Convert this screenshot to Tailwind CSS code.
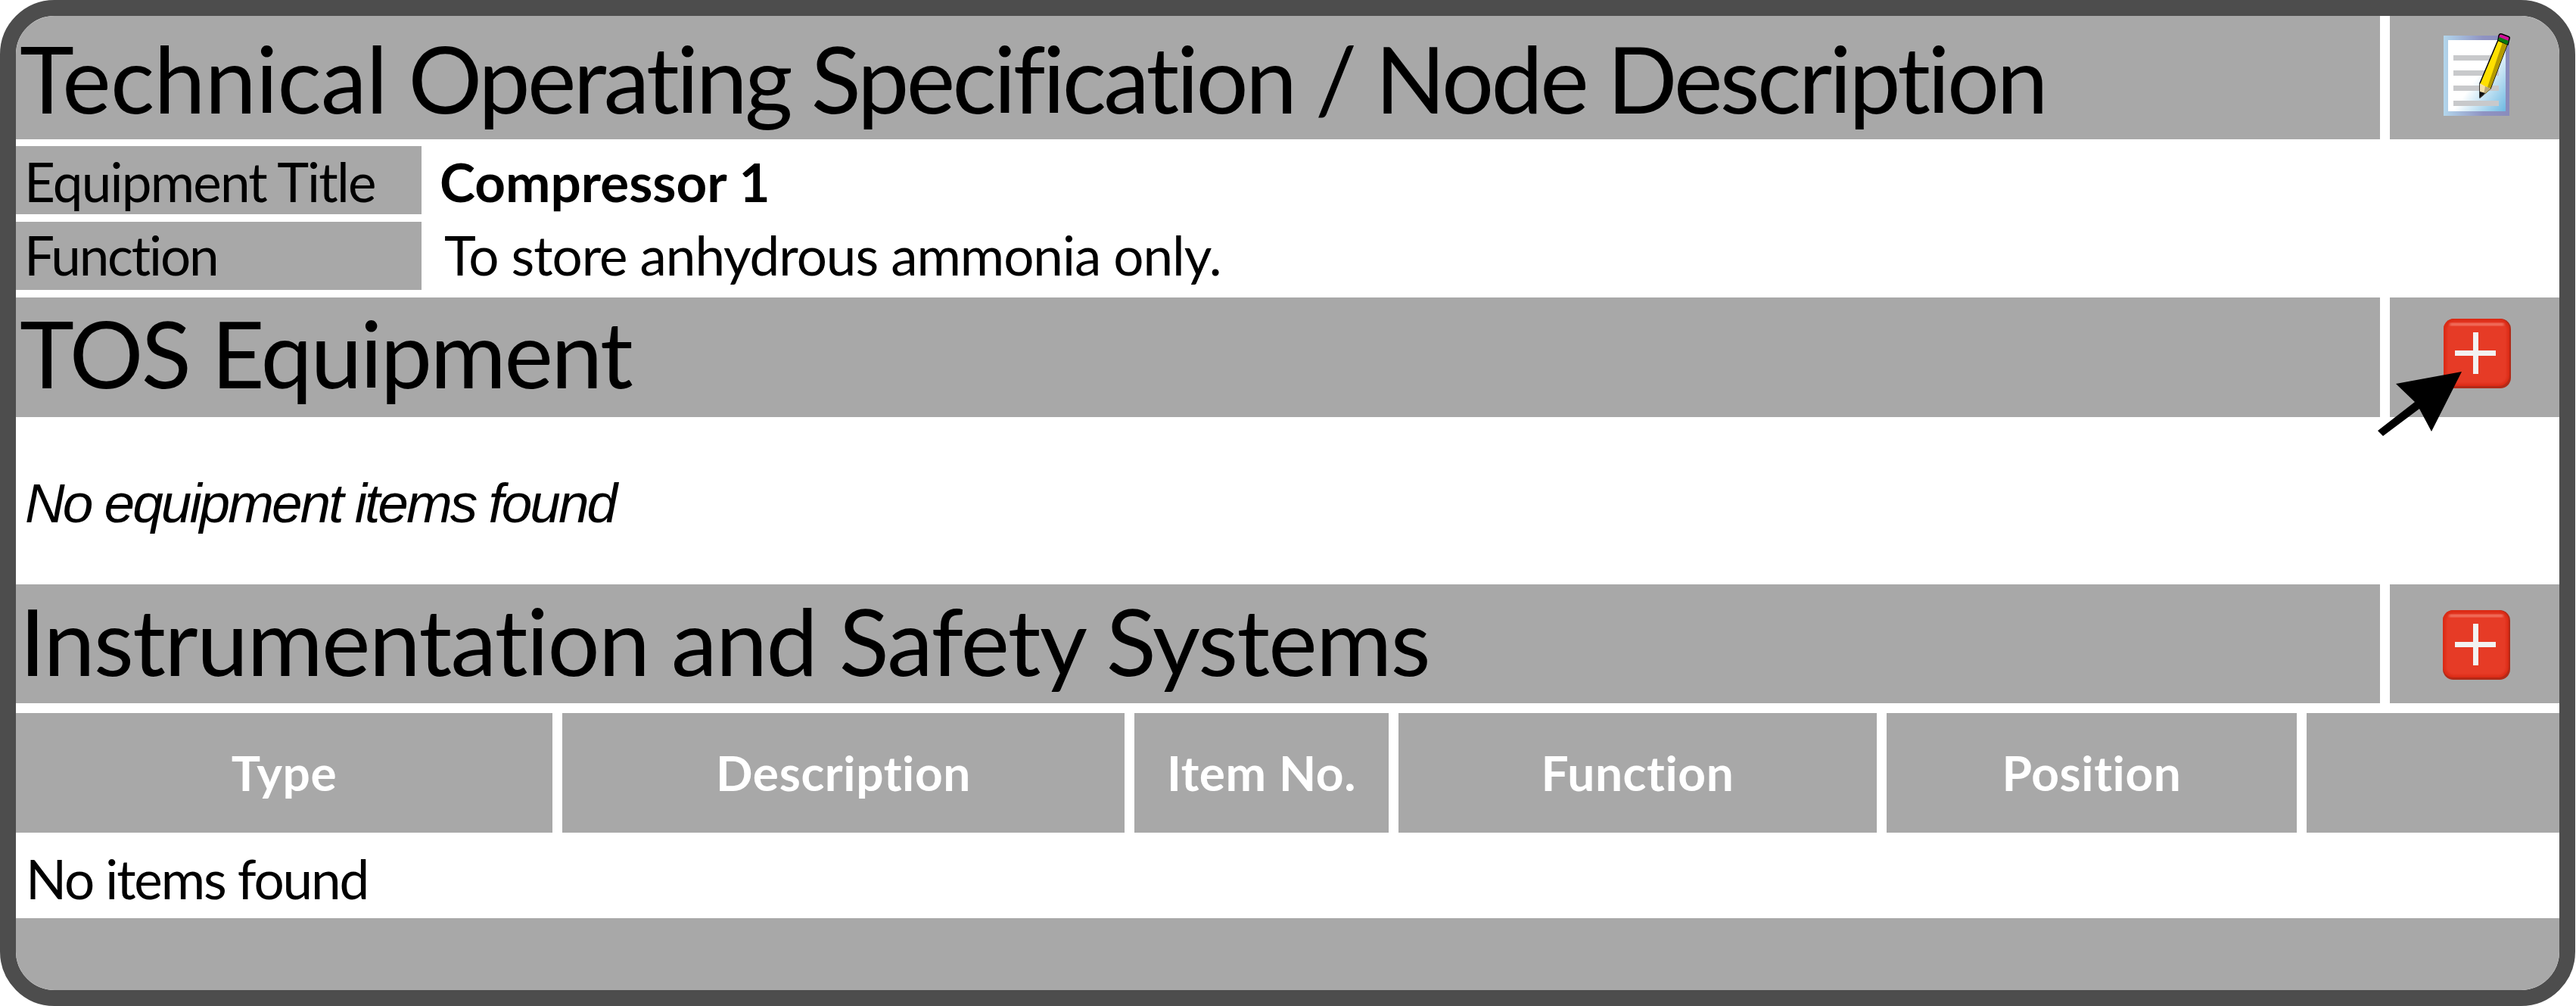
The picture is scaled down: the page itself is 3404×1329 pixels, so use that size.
<!DOCTYPE html>
<html lang="en">

<head>
    <meta charset="UTF-8">
    <meta name="viewport" content="width=device-width, initial-scale=1.0">
    <title>Technical Operating Specification</title>
    <script src="https://cdn.jsdelivr.net/npm/@tailwindcss/browser@4"></script>
</head>

<body class="h-[1329px] overflow-hidden bg-white">
    <div class="relative flex h-[1329px] w-[3403px] flex-col overflow-hidden rounded-[72px] border-[21px] border-[#4d4d4d] bg-white font-['Lato',sans-serif] text-black [font-variant-ligatures:none]">

        <!-- title -->
        <div class="flex h-[163px] shrink-0 gap-[13px]">
            <div class="flex flex-1 items-center whitespace-pre bg-[#a8a8a8] pl-[5px] text-[122px] leading-none tracking-[-3.6px]"><span class="tracking-[-0.8px]">Technical</span> Operating Specification / Node Description</div>
            <div class="flex w-[224px] bg-[#a8a8a8] pl-[62px] pt-[19px]">
                <svg width="110" height="120" viewBox="0 0 110 120">
                    <defs>
                        <linearGradient id="frame" x1="0" x2="1" y1="0" y2="0">
                            <stop offset="0" stop-color="#b3d6ec" />
                            <stop offset="0.6" stop-color="#8f93c2" />
                            <stop offset="1" stop-color="#8a8cbc" />
                        </linearGradient>
                        <linearGradient id="sheet" x1="0.2" x2="1" y1="0.3" y2="1">
                            <stop offset="0.35" stop-color="#ffffff" />
                            <stop offset="1" stop-color="#6db9e2" />
                        </linearGradient>
                    </defs>
                    <rect x="9" y="7" width="87" height="106" fill="url(#frame)" />
                    <rect x="15" y="13" width="76" height="94" fill="url(#sheet)" />
                    <rect x="22" y="33" width="60" height="7" fill="#c8c9cb" />
                    <rect x="22" y="53" width="60" height="7" fill="#c8c9cb" />
                    <rect x="22" y="73" width="60" height="7" fill="#c8c9cb" />
                    <rect x="22" y="93" width="60" height="7" fill="#c8c9cb" />
                    <path d="M81 13 L93 19 L71 77 L57 89 L57 70 Z" fill="#ffe000" stroke="#000" stroke-width="1.5" stroke-linejoin="round" />
                    <path d="M87 16 L93 19 L71 77 L64 84 Z" fill="#b49b00" />
                    <path d="M57 70 L64 74 L71 77 L57 89 Z" fill="#f3dfa8" />
                    <path d="M64 74 L71 77 L62 85 Z" fill="#b9a77a" />
                    <path d="M57 81 L64 83 L57 89 Z" fill="#111" />
                    <path d="M81 13 L94 19 L96 11 Q97 9 94 8 L86 5 Q83 4 82 7 Z" fill="#d0109a" stroke="#000" stroke-width="1.5" stroke-linejoin="round" />
                    <path d="M81 13 L83 9 L95 14 L93 19 Z" fill="#0a7a10" />
                </svg>
            </div>
        </div>

        <!-- details -->
        <div class="mt-[9px] flex h-[90px] shrink-0">
            <div class="flex w-[536px] items-center bg-[#a8a8a8] pl-[11px] pt-[3px] text-[71px] leading-none tracking-[-1.8px]">Equipment Title</div>
            <div class="flex items-center pl-[24px] pt-[3px] text-[71px] font-bold leading-none">Compressor 1</div>
        </div>
        <div class="mt-[10px] flex h-[90px] shrink-0">
            <div class="flex w-[536px] items-center bg-[#a8a8a8] pb-[4px] pl-[11px] text-[71px] leading-none tracking-[-2.2px]">Function</div>
            <div class="flex items-center pb-[4px] pl-[30px] text-[71px] leading-none tracking-[-1.05px]">To store anhydrous ammonia only.</div>
        </div>

        <!-- equipment -->
        <div class="mt-[10px] flex h-[158px] shrink-0 gap-[13px]">
            <div class="flex flex-1 items-center bg-[#a8a8a8] pb-[12px] pl-[5px] text-[122px] leading-none tracking-[-2.5px]">TOS Equipment</div>
            <div class="flex w-[224px] bg-[#a8a8a8] pl-[71px] pt-[28px]">
                <svg width="89" height="92" viewBox="0 0 89 92">
                    <defs>
                        <filter id="soft" x="-20%" y="-20%" width="140%" height="140%">
                            <feGaussianBlur stdDeviation="1.5" />
                        </filter>
                    </defs>
                    <rect width="89" height="92" rx="14" fill="#b32a18" />
                    <rect width="87" height="89" rx="14" fill="#dc2c16" />
                    <rect x="4" y="4" width="80" height="82" rx="11" fill="#e63a28" filter="url(#soft)" />
                    <rect x="8" y="6" width="72" height="3" rx="1.5" fill="#f3806f" filter="url(#soft)" />
                    <rect x="15" y="42" width="54" height="7" fill="#f2f2f2" />
                    <rect x="39" y="18" width="7" height="55" fill="#f2f2f2" />
                </svg>
            </div>
        </div>
        <div class="flex h-[221px] shrink-0 items-center pl-[12px] pt-[6px] font-['Liberation_Sans',sans-serif] text-[73px] italic leading-none tracking-[-3px]">No equipment items found</div>

        <!-- instrumentation -->
        <div class="flex h-[157px] shrink-0 gap-[13px]">
            <div class="flex flex-1 items-center bg-[#a8a8a8] pb-[10px] pl-[5px] text-[122px] leading-none tracking-[-1.65px]">Instrumentation and Safety Systems</div>
            <div class="flex w-[224px] bg-[#a8a8a8] pl-[70px] pt-[34px]">
                <svg width="89" height="92" viewBox="0 0 89 92">
                    <rect width="89" height="92" rx="14" fill="#b32a18" />
                    <rect width="87" height="89" rx="14" fill="#dc2c16" />
                    <rect x="4" y="4" width="80" height="82" rx="11" fill="#e63a28" filter="url(#soft)" />
                    <rect x="8" y="6" width="72" height="3" rx="1.5" fill="#f3806f" filter="url(#soft)" />
                    <rect x="16" y="42" width="54" height="7" fill="#f2f2f2" />
                    <rect x="40" y="18" width="7" height="55" fill="#f2f2f2" />
                </svg>
            </div>
        </div>

        <div class="mt-[13px] grid h-[158px] shrink-0 grid-cols-[709px_743px_336px_632px_542px_1fr] gap-x-[13px] text-[64px] font-bold leading-none tracking-[0.6px] text-white">
            <div class="flex items-center justify-center bg-[#a8a8a8]">Type</div>
            <div class="flex items-center justify-center bg-[#a8a8a8]">Description</div>
            <div class="flex items-center justify-center bg-[#a8a8a8]">Item No.</div>
            <div class="flex items-center justify-center bg-[#a8a8a8]">Function</div>
            <div class="flex items-center justify-center bg-[#a8a8a8]">Position</div>
            <div class="bg-[#a8a8a8]"></div>
        </div>
        <div class="flex h-[113px] shrink-0 items-center pl-[13px] pt-[8px] text-[71px] leading-none tracking-[-2.1px]">No items found</div>
        <div class="flex-1 bg-[#a8a8a8]"></div>

        <!-- pointer arrow -->
        <svg class="absolute left-[3120px] top-[469px]" width="115" height="87" viewBox="0 0 115 87">
            <path d="M112 1 L25 17 L50 41 L1 79 L8 86 L56 50 L72 80 Z" fill="#000" />
        </svg>
    </div>
</body>

</html>
